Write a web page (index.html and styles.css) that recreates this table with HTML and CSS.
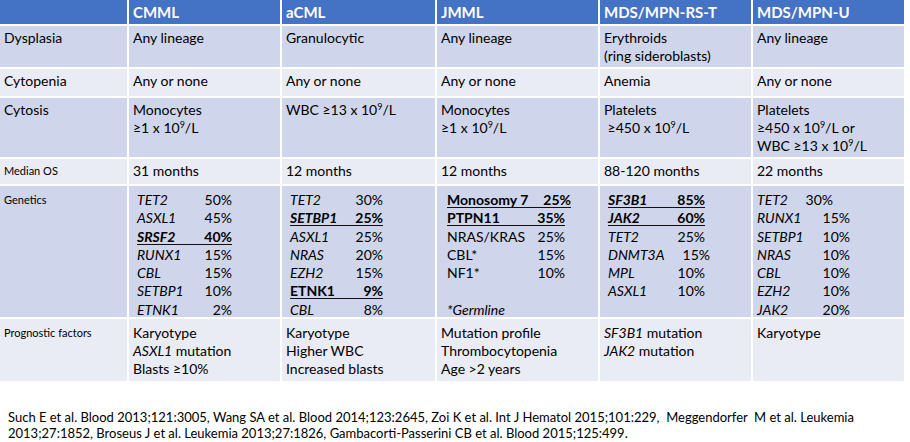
FILE: index.html
```html
<!DOCTYPE html>
<html lang="en">
<head>
<meta charset="utf-8">
<title>MDS/MPN overlap neoplasms</title>
<link rel="stylesheet" href="styles.css">
</head>
<body>
<div class="tbl">
  <div class="hd"></div>
  <div class="hd">CMML</div>
  <div class="hd">aCML</div>
  <div class="hd">JMML</div>
  <div class="hd">MDS/MPN-RS-T</div>
  <div class="hd">MDS/MPN-U</div>

  <div class="c dk">Dysplasia</div>
  <div class="c dk">Any lineage</div>
  <div class="c dk">Granulocytic</div>
  <div class="c dk">Any lineage</div>
  <div class="c dk">Erythroids<br>(ring sideroblasts)</div>
  <div class="c dk">Any lineage</div>

  <div class="c lt">Cytopenia</div>
  <div class="c lt">Any or none</div>
  <div class="c lt">Any or none</div>
  <div class="c lt">Any or none</div>
  <div class="c lt">Anemia</div>
  <div class="c lt">Any or none</div>

  <div class="c dk">Cytosis</div>
  <div class="c dk">Monocytes<br>≥1 x 10<sup>9</sup>/L</div>
  <div class="c dk">WBC ≥13 x 10<sup>9</sup>/L</div>
  <div class="c dk">Monocytes<br>≥1 x 10<sup>9</sup>/L</div>
  <div class="c dk">Platelets<br>&nbsp;≥450 x 10<sup>9</sup>/L</div>
  <div class="c dk">Platelets<br>≥450 x 10<sup>9</sup>/L or<br>WBC ≥13 x 10<sup>9</sup>/L</div>

  <div class="c lt sm">Median OS</div>
  <div class="c lt">31 months</div>
  <div class="c lt">12 months</div>
  <div class="c lt">12 months</div>
  <div class="c lt">88-120 months</div>
  <div class="c lt">22 months</div>

  <div class="c dk sm gen-l">Genetics</div>
  <div class="c dk gen col1">
    <div class="g"><i>TET2</i><span>50%</span></div>
    <div class="g"><i>ASXL1</i><span>45%</span></div>
    <div class="g u"><i>SRSF2</i><span>40%</span></div>
    <div class="g"><i>RUNX1</i><span>15%</span></div>
    <div class="g"><i>CBL</i><span>15%</span></div>
    <div class="g"><i>SETBP1</i><span>10%</span></div>
    <div class="g"><i>ETNK1</i><span>2%</span></div>
  </div>
  <div class="c dk gen col2">
    <div class="g"><i>TET2</i><span>30%</span></div>
    <div class="g u"><i>SETBP1</i><span>25%</span></div>
    <div class="g"><i>ASXL1</i><span>25%</span></div>
    <div class="g"><i>NRAS</i><span>20%</span></div>
    <div class="g"><i>EZH2</i><span>15%</span></div>
    <div class="g u"><span>ETNK1</span><span>9%</span></div>
    <div class="g"><i>CBL</i><span>8%</span></div>
  </div>
  <div class="c dk gen col3">
    <div class="g u wide"><span>Monosomy 7</span><span>25%</span></div>
    <div class="g u"><span>PTPN11</span><span>35%</span></div>
    <div class="g"><span>NRAS/KRAS</span><span>25%</span></div>
    <div class="g"><span>CBL*</span><span>15%</span></div>
    <div class="g"><span>NF1*</span><span>10%</span></div>
    <div class="g"></div>
    <div class="g"><i>*Germline</i></div>
  </div>
  <div class="c dk gen col4">
    <div class="g u"><i>SF3B1</i><span>85%</span></div>
    <div class="g u"><i>JAK2</i><span>60%</span></div>
    <div class="g"><i>TET2</i><span>25%</span></div>
    <div class="g wide"><i>DNMT3A</i><span>15%</span></div>
    <div class="g"><i>MPL</i><span>10%</span></div>
    <div class="g"><i>ASXL1</i><span>10%</span></div>
  </div>
  <div class="c dk gen col5">
    <div class="g narrow"><i>TET2</i><span>30%</span></div>
    <div class="g"><i>RUNX1</i><span>15%</span></div>
    <div class="g"><i>SETBP1</i><span>10%</span></div>
    <div class="g"><i>NRAS</i><span>10%</span></div>
    <div class="g"><i>CBL</i><span>10%</span></div>
    <div class="g"><i>EZH2</i><span>10%</span></div>
    <div class="g"><i>JAK2</i><span>20%</span></div>
  </div>

  <div class="c lt sm prog-l">Prognostic factors</div>
  <div class="c lt prog">Karyotype<br><i>ASXL1</i> mutation<br>Blasts ≥10%</div>
  <div class="c lt prog">Karyotype<br>Higher WBC<br>Increased blasts</div>
  <div class="c lt prog">Mutation profile<br>Thrombocytopenia<br>Age &gt;2 years</div>
  <div class="c lt prog"><i>SF3B1</i> mutation<br><i>JAK2</i> mutation</div>
  <div class="c lt prog">Karyotype</div>
</div>

<p class="refs">Such E et al. Blood 2013;121:3005, Wang SA et al. Blood 2014;123:2645, Zoi K et al. Int J Hematol 2015;101:229, &nbsp;Meggendorfer &nbsp;M et al. Leukemia<br>2013;27:1852, Broseus J et al. Leukemia 2013;27:1826, Gambacorti-Passerini CB et al. Blood 2015;125:499.</p>
</body>
</html>
```

FILE: styles.css
```css
html, body {
  margin: 0;
  padding: 0;
  background: #ffffff;
}

body {
  font-family: Lato, "Open Sans", sans-serif;
  color: #000;
  width: 910px;
  height: 442px;
  overflow: hidden;
}

.tbl {
  display: grid;
  grid-template-columns: 127px 151px 153px 161px 151px 151px;
  grid-template-rows: 24px 41px 27px 59px 25px 131px 62px;
  gap: 2px;
  width: 904px;
  background: #ffffff;
}

.hd {
  background: #4472c4;
  color: #ffffff;
  font-weight: 700;
  font-size: 15px;
  line-height: 18px;
  padding: 3px 4px 0;
}

.c {
  font-size: 14px;
  line-height: 18px;
  padding: 3px 4px 0 4px;
}

.dk {
  background: #cfd5ea;
}

.lt {
  background: #e9ebf5;
}

.sm {
  font-size: 11px;
}

.gen-l,
.prog-l,
.prog {
  padding-top: 5px;
}

sup {
  font-size: 9px;
  line-height: 0;
  vertical-align: 5px;
}

i {
  font-style: italic;
}

.gen {
  padding-top: 5px;
  padding-left: 8px;
  line-height: 18.3px;
}

.g {
  display: flex;
  justify-content: space-between;
  height: 18.3px;
}

.g.u {
  font-weight: 700;
  background: linear-gradient(#111, #111) left 16px / 100% 1px no-repeat;
}

.col1 .g { width: 95px; }
.col2 .g { width: 93px; }
.col3 { padding-left: 10px; }
.col3 .g { width: 118px; }
.col3 .g.wide { width: 124px; }
.col4 .g { width: 97px; }
.col4 .g.wide { width: 102px; }
.col5 { padding-left: 4px; }
.col5 .g { width: 93px; }
.col5 .g.narrow { width: 76px; }

.refs {
  margin: 28px 0 0 8px;
  font-size: 13px;
  line-height: 16px;
}
```
